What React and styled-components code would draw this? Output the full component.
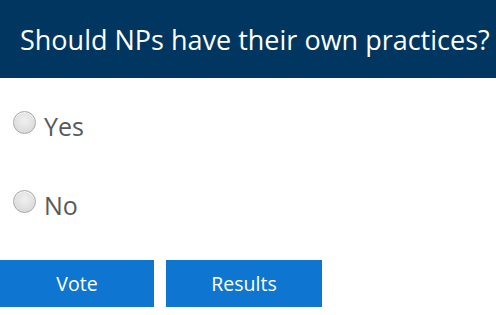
import React, { useState } from "react";
import styled, { createGlobalStyle } from "styled-components";

const GlobalStyle = createGlobalStyle`
  html, body {
    margin: 0;
    padding: 0;
    background: #fff;
    font-family: "Open Sans", "Liberation Sans", sans-serif;
  }
`;

const Poll = styled.div`
  width: 496px;
  height: 315px;
  overflow: hidden;
`;

const Header = styled.h1`
  margin: 0;
  height: 78px;
  background: #003660;
  color: #fff;
  font-size: 27px;
  font-weight: 400;
  display: flex;
  align-items: center;
  padding: 0 0 0 20px;
  white-space: nowrap;
`;

const Options = styled.div`
  display: flex;
  flex-direction: column;
  gap: 55px;
  padding: 32px 0 0 13px;
`;

const Option = styled.label`
  display: flex;
  align-items: center;
  gap: 8px;
  height: 24px;
  font-size: 25px;
  color: #595959;
  cursor: pointer;
`;

const Radio = styled.span`
  width: 21px;
  height: 21px;
  border-radius: 50%;
  border: 1px solid #a8a8a8;
  background: radial-gradient(circle at 50% 40%, #f0f0f0 0%, #dcdcdc 70%, #cfcfcf 100%);
  box-shadow: inset 0 1px 1px rgba(255, 255, 255, 0.8);
  position: relative;
  flex-shrink: 0;

  &::after {
    content: "";
    position: absolute;
    inset: 6px;
    border-radius: 50%;
    background: ${(p) => (p.$checked ? "#444" : "transparent")};
  }
`;

const Text = styled.span`
  position: relative;
  top: 4px;
`;

const Buttons = styled.div`
  display: flex;
  gap: 12px;
  margin-top: 47px;
`;

const Button = styled.button`
  width: ${(p) => p.$width}px;
  height: 47px;
  border: none;
  background: #0e76d0;
  color: #fff;
  font-family: "Open Sans", "Liberation Sans", sans-serif;
  font-size: 19.5px;
  padding: 0;
  cursor: pointer;
`;

export default function App() {
  const [choice, setChoice] = useState(null);

  return (
    <>
      <GlobalStyle />
      <Poll>
        <Header>Should NPs have their own practices?</Header>
        <Options>
          {["Yes", "No"].map((o) => (
            <Option key={o} onClick={() => setChoice(o)}>
              <Radio $checked={choice === o} />
              <Text>{o}</Text>
            </Option>
          ))}
        </Options>
        <Buttons>
          <Button $width={154}>Vote</Button>
          <Button $width={156}>Results</Button>
        </Buttons>
      </Poll>
    </>
  );
}
